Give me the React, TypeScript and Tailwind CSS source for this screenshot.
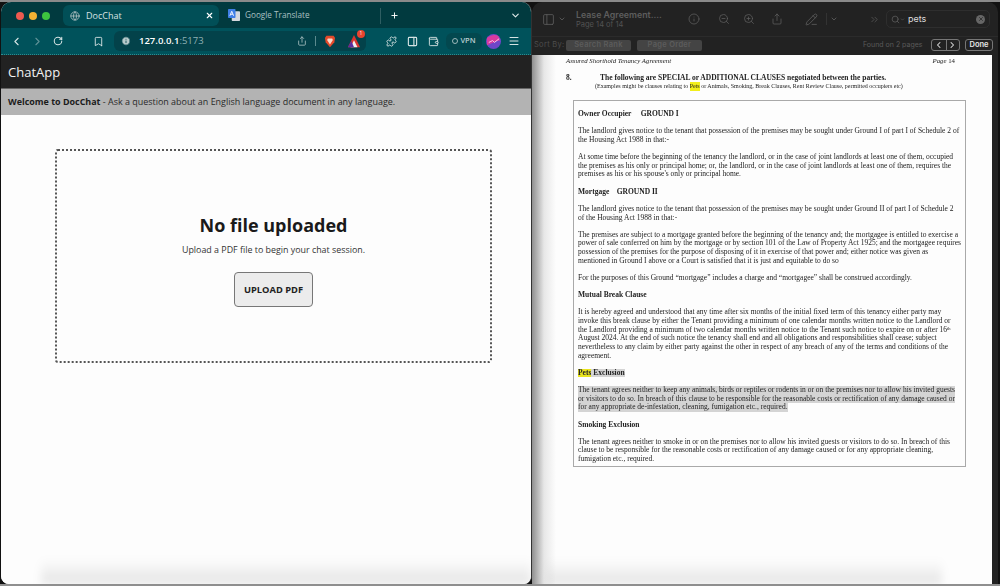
import {
  Bookmark,
  ChevronDown,
  ChevronLeft,
  ChevronRight,
  ChevronsRight,
  Globe,
  Info,
  Menu,
  PanelRight,
  PencilLine,
  Plus,
  Puzzle,
  RotateCw,
  Search,
  Share,
  Wallet,
  X,
  ZoomIn,
  ZoomOut,
} from 'lucide-react';

type Line = { text?: string; bold?: boolean };

const clauseLines: Line[] = [
  { text: 'The landlord gives notice to the tenant that possession of the premises may be sought under Ground I of part I of Schedule 2 of' },
  { text: 'the Housing Act 1988 in that:-' },
  {},
  { text: 'At some time before the beginning of the tenancy the landlord, or in the case of joint landlords at least one of them, occupied' },
  { text: 'the premises as his only or principal home; or, the landlord, or in the case of joint landlords at least one of them, requires the' },
  { text: "premises as his or his spouse's only or principal home." },
  {},
  { text: 'Mortgage\u00a0\u00a0\u00a0\u00a0GROUND II', bold: true },
  {},
  { text: 'The landlord gives notice to the tenant that possession of the premises may be sought under Ground II of part I of Schedule 2' },
  { text: 'of the Housing Act 1988 in that:-' },
  {},
  { text: 'The premises are subject to a mortgage granted before the beginning of the tenancy and; the mortgagee is entitled to exercise a' },
  { text: 'power of sale conferred on him by the mortgage or by section 101 of the Law of Property Act 1925; and the mortgagee requires' },
  { text: 'possession of the premises for the purpose of disposing of it in exercise of that power and; either notice was given as' },
  { text: 'mentioned in Ground I above or a Court is satisfied that it is just and equitable to do so' },
  {},
  { text: 'For the purposes of this Ground \u201cmortgage\u201d includes a charge and \u201cmortgagee\u201d shall be construed accordingly.' },
  {},
  { text: 'Mutual Break Clause', bold: true },
  {},
  { text: 'It is hereby agreed and understood that any time after six months of the initial fixed term of this tenancy either party may' },
  { text: 'invoke this break clause by either the Tenant providing a minimum of one calendar months written notice to the Landlord or' },
];

const smokingLines: Line[] = [
  { text: 'Smoking Exclusion', bold: true },
  {},
  { text: 'The tenant agrees neither to smoke in or on the premises nor to allow his invited guests or visitors to do so. In breach of this' },
  { text: 'clause to be responsible for the reasonable costs or rectification of any damage caused or for any appropriate cleaning,' },
  { text: 'fumigation etc., required.' },
];

const petLines = [
  'The tenant agrees neither to keep any animals, birds or reptiles or rodents in or on the premises nor to allow his invited guests',
  'or visitors to do so. In breach of this clause to be responsible for the reasonable costs or rectification of any damage caused or',
  'for any appropriate de-infestation, cleaning, fumigation etc., required.',
];

function DocLine({ text, bold }: Line) {
  return (
    <div className={`h-[8.63px] whitespace-nowrap ${bold ? 'font-bold' : ''}`}>
      {text}
    </div>
  );
}

function BraveIcon() {
  return (
    <svg viewBox="0 0 16 18" className="h-[13px] w-[12px]">
      <path d="M3 1h10l2 3-1 6-6 7-6-7-1-6z" fill="#e2492a" />
      <path d="M5 5h6l1 2-2 3-2 3-2-3-2-3z" fill="#f7d9cc" />
    </svg>
  );
}

function RewardsIcon() {
  return (
    <div className="relative h-[14px] w-[14px]">
      <svg viewBox="0 0 16 16" className="h-[14px] w-[14px]">
        <path d="M8 1l7 14H1z" fill="#d8352f" />
        <path d="M8 7l4 8H4z" fill="#eee" />
        <path d="M1 15l4-7 3 7z" fill="#5b2c9f" />
      </svg>
      <span className="absolute -top-[4px] -right-[4px] flex h-[8px] w-[8px] items-center justify-center rounded-full bg-[#e8432f] text-[5px] text-white">
        1
      </span>
    </div>
  );
}

function TranslateIcon() {
  return (
    <svg viewBox="0 0 16 16" className="h-[12px] w-[12px]">
      <rect x="5" y="3" width="11" height="13" rx="1" fill="#d5d9de" />
      <rect x="0" y="0" width="10" height="12" rx="1" fill="#3f7fe6" />
      <path d="M2.500 9l2.500-6 2.500 6M3.500 7h3" stroke="#fff" strokeWidth="1.200" fill="none" />
    </svg>
  );
}

function Avatar() {
  return (
    <svg viewBox="0 0 16 16" className="h-[15px] w-[15px]">
      <circle cx="8" cy="8" r="8" fill="#6f46c8" />
      <path d="M1 4C5 1 10 0 13 2l2 5C11 7 5 11 1 12z" fill="#d83a9e" />
      <path d="M3 9l4-2 2 2 5-4" stroke="#f9d0e6" strokeWidth="1" fill="none" />
    </svg>
  );
}

function BrowserWindow() {
  return (
    <div className="relative flex h-full w-[531px] shrink-0 flex-col overflow-hidden rounded-t-[10px] rounded-b-[8px] border-r border-[#333] bg-white font-['Open_Sans',sans-serif]">
      <div className="flex h-[26px] shrink-0 items-center bg-[#013a3f] pt-[1px] text-[#c4d6d6]">
        <div className="flex w-[62px] shrink-0 items-center gap-[5px] pl-[15px]">
          <span className="h-[8px] w-[8px] rounded-full bg-[#ee5a50]" />
          <span className="h-[8px] w-[8px] rounded-full bg-[#f2b233]" />
          <span className="h-[8px] w-[8px] rounded-full bg-[#3dc53f]" />
        </div>
        <div className="flex h-[21px] w-[156px] shrink-0 items-center rounded-[6px] bg-[#014f57] pr-[5px] pl-[7px] text-[9px] text-[#d6e2e2]">
          <Globe className="h-[10px] w-[10px] text-[#aebfc1]" />
          <span className="ml-[6px] flex-1">DocChat</span>
          <X className="h-[9px] w-[9px] text-white" strokeWidth={3} />
        </div>
        <div className="flex w-[161px] shrink-0 items-center gap-[5px] pl-[9px] text-[8.200px] text-[#a9c0c2]">
          <TranslateIcon />
          <span>Google Translate</span>
        </div>
        <div className="h-[16px] w-px bg-[#2f5e62]" />
        <Plus className="ml-[9px] h-[9px] w-[9px] text-white" strokeWidth={2.500} />
        <ChevronDown className="mr-[10px] ml-auto h-[11px] w-[11px] text-[#dfe9e9]" strokeWidth={2.500} />
      </div>

      <div className="flex h-[27px] shrink-0 items-center border-b border-dotted border-[#2d8b8f] bg-[#00525b] text-[#d5e3e3]">
        <ChevronLeft className="ml-[9px] h-[13px] w-[13px]" strokeWidth={2} />
        <ChevronRight className="ml-[8px] h-[13px] w-[13px] text-[#5f9297]" strokeWidth={2} />
        <RotateCw className="ml-[9px] h-[10px] w-[10px]" strokeWidth={2.500} />
        <Bookmark className="ml-[30px] h-[11px] w-[11px]" strokeWidth={2} />
        <div className="ml-[10px] flex h-[20px] w-[252px] shrink-0 items-center rounded-[6px] bg-[#03424a] pl-[7px] text-[9.500px]">
          <Info className="h-[10px] w-[10px] fill-[#b7c9ca] text-[#03424a]" strokeWidth={2} />
          <span className="ml-[8px] font-semibold text-white">127.0.0.1</span>
          <span className="text-[#8fb0b3]">:5173</span>
          <Share className="ml-auto h-[10px] w-[10px] text-[#a9c0c2]" strokeWidth={2} />
          <div className="mx-[8px] h-[10px] w-px bg-[#5b8a8e]" />
          <BraveIcon />
          <div className="mr-[5px] ml-[11px]">
            <RewardsIcon />
          </div>
        </div>
        <Puzzle className="ml-[20px] h-[11px] w-[11px]" strokeWidth={2} />
        <PanelRight className="ml-[10px] h-[11px] w-[11px]" strokeWidth={2.500} />
        <Wallet className="ml-[10px] h-[11px] w-[11px]" strokeWidth={2} />
        <div className="ml-[7px] flex h-[17px] w-[36px] items-center justify-center gap-[2px] rounded-[6px] bg-[#03484f] text-[7.500px] font-semibold text-[#b9cfd0]">
          <span className="h-[6px] w-[6px] rounded-full border-[1.500px] border-[#9db7b9]" />
          VPN
        </div>
        <div className="ml-[4px]">
          <Avatar />
        </div>
        <Menu className="ml-[7px] h-[12px] w-[12px]" strokeWidth={2} />
      </div>

      <div className="flex h-[33px] shrink-0 items-center bg-[#222] pt-[2px] pl-[7px] text-[13px] text-[#f2f2f2]">
        ChatApp
      </div>
      <div className="flex h-[27px] shrink-0 items-center border-t border-[#666] bg-[#b3b3b3] pl-[7px] text-[8.950px] text-[#2a2a2a]">
        <b className="font-bold text-[#1c1c1c]">Welcome to DocChat</b>
        <span className="whitespace-pre"> - Ask a question about an English language document in any language.</span>
      </div>

      <div className="flex-1 bg-[#fdfdfd] pt-[34px] pl-[54px]">
        <div className="flex h-[214px] w-[437px] flex-col items-center rounded-[3px] border-2 border-dotted border-[#555] pt-[60px]">
          <h1 className="text-[18px] leading-[28px] font-bold text-[#1a1a1a]">No file uploaded</h1>
          <p className="mt-[4px] text-[8.900px] leading-[14px] text-[#333]">
            Upload a PDF file to begin your chat session.
          </p>
          <button
            type="button"
            className="mt-[15px] h-[35px] w-[79px] rounded-[4px] border border-[#777] bg-[#ececec] text-[9.300px] font-bold text-[#222]"
          >
            UPLOAD PDF
          </button>
        </div>
      </div>
      <div className="absolute right-0 bottom-0 left-[40px] h-[26px] bg-gradient-to-t from-black/10 to-transparent blur-[4px]" />
    </div>
  );
}

function PreviewToolbar() {
  return (
    <div className="shrink-0 font-['Inter',sans-serif]">
      <div className="flex h-[34px] items-center text-[#5f5f5f]">
        <PanelRight className="ml-[10px] h-[13px] w-[13px] rotate-180" strokeWidth={1.500} />
        <ChevronDown className="ml-[3px] h-[8px] w-[8px]" strokeWidth={2.500} />
        <div className="ml-[10px] w-[94px] shrink-0">
          <div className="text-[8.800px] leading-[11px] font-semibold whitespace-nowrap text-[#5d5d5d]">Lease Agreement....</div>
          <div className="text-[7.500px] leading-[10px] text-[#525252]">Page 14 of 14</div>
        </div>
        <Info className="ml-[18px] h-[12px] w-[12px]" strokeWidth={1.500} />
        <ZoomOut className="ml-[18px] h-[12px] w-[12px]" strokeWidth={1.500} />
        <ZoomIn className="ml-[13px] h-[12px] w-[12px]" strokeWidth={1.500} />
        <Share className="ml-[16px] h-[12px] w-[12px]" strokeWidth={1.500} />
        <PencilLine className="ml-[22px] h-[13px] w-[13px]" strokeWidth={1.500} />
        <div className="ml-[8px] h-[12px] w-px bg-[#333]" />
        <ChevronDown className="ml-[3px] h-[8px] w-[8px]" strokeWidth={2.500} />
        <ChevronsRight className="ml-[31px] h-[11px] w-[11px]" strokeWidth={1.500} />
        <div className="ml-[6px] flex h-[18px] w-[104px] shrink-0 items-center rounded-[5px] border border-[#2e2e2e] pr-[4px] pl-[4px]">
          <Search className="h-[9px] w-[9px]" strokeWidth={2} />
          <ChevronDown className="h-[5px] w-[5px]" strokeWidth={3} />
          <span className="ml-[3px] flex-1 text-[9px] text-[#dcdcdc]">pets</span>
          <span className="flex h-[9px] w-[9px] items-center justify-center rounded-full bg-[#666]">
            <X className="h-[6px] w-[6px] text-[#262626]" strokeWidth={3} />
          </span>
        </div>
      </div>
      <div className="flex h-[19px] items-center border-t border-[#2b2b2b] pb-[2px] text-[7.500px] tracking-[0.3px] text-[#4d4d4d]">
        <span className="ml-[2px] w-[32px] shrink-0 whitespace-nowrap">Sort By:</span>
        <span className="flex h-[11px] w-[65px] shrink-0 items-center justify-center rounded-[2px] bg-[#444] font-semibold whitespace-nowrap text-[#5c5c5c]">Search Rank</span>
        <span className="ml-[6px] flex h-[11px] w-[65px] shrink-0 items-center justify-center rounded-[2px] bg-[#444] font-semibold whitespace-nowrap text-[#5c5c5c]">Page Order</span>
        <span className="ml-[161px] w-[68px] shrink-0 text-[7px] tracking-normal whitespace-nowrap text-[#5a5a5a]">Found on 2 pages</span>
        <div className="flex h-[12px] w-[29px] shrink-0 items-center rounded-[3px] border border-[#777] text-[#ddd]">
          <ChevronLeft className="h-[10px] w-[14px]" strokeWidth={2.500} />
          <div className="h-full w-px bg-[#777]" />
          <ChevronRight className="h-[10px] w-[13px]" strokeWidth={2.500} />
        </div>
        <span className="ml-[5px] flex h-[12px] w-[28px] shrink-0 items-center justify-center rounded-[3px] border border-[#777] font-semibold tracking-normal text-[#e6e6e6]">Done</span>
      </div>
    </div>
  );
}

function ClauseBox() {
  return (
    <div className="ml-[41px] h-[367px] w-[393px] border border-[#a9a9a9] pt-[9px] pl-[4px] text-[7.500px] leading-[8.630px] text-[#222] blur-[0.35px]">
      <div className="mb-[8.630px] h-[8.630px] font-bold whitespace-pre">{'Owner Occupier     GROUND I'}</div>
      {clauseLines.map((line, i) => (
        <DocLine key={i} {...line} />
      ))}
      <div className="flex h-[8.630px] whitespace-nowrap">
        the Landlord providing a minimum of two calendar months written notice to the Tenant such notice to expire on or after 16
        <sup className="top-0 text-[4.500px] leading-[5px]">th</sup>
      </div>
      <DocLine text="August 2024.  At the end of such notice the tenancy shall end and all obligations and responsibilities shall cease; subject" />
      <DocLine text="nevertheless to any claim by either party against the other in respect of any breach of any of the terms and conditions of the" />
      <DocLine text="agreement." />
      <DocLine />
      <div className="flex h-[8.630px] font-bold whitespace-nowrap">
        <span className="bg-[#e9e41d]">Pets</span>
        <span className="bg-[#d4d4d4] pl-[2px]">Exclusion</span>
      </div>
      <DocLine />
      <div className="flex flex-col items-start">
        {petLines.map((text) => (
          <div key={text} className="h-[8.630px] bg-[#d4d4d4] whitespace-nowrap">
            {text}
          </div>
        ))}
      </div>
      <DocLine />
      {smokingLines.map((line, i) => (
        <DocLine key={i} {...line} />
      ))}
    </div>
  );
}

function PreviewWindow() {
  return (
    <div className="flex h-full flex-1 flex-col rounded-t-[10px] bg-[#222] pr-[6px]">
      <div className="-mr-[6px]">
        <PreviewToolbar />
      </div>
      <div className="relative flex-1 overflow-hidden bg-[#fdfdfd] pl-[34px] font-['Liberation_Serif',serif] text-[#222]">
        <div className="flex h-[11px] items-center pt-[1px] pr-[37px] text-[6.800px] italic blur-[0.3px]">
          <span>Assured Shorthold Tenancy Agreement</span>
          <span className="ml-auto">
            Page <span className="not-italic">14</span>
          </span>
        </div>
        <div className="mt-[6px] flex h-[11px] items-center text-[7.500px] font-bold whitespace-nowrap blur-[0.3px]">
          <span className="w-[34px] shrink-0">8.</span>
          <span>The following are SPECIAL or ADDITIONAL CLAUSES negotiated between the parties.</span>
        </div>
        <div className="flex h-[6px] items-center pl-[29px] text-[6px] whitespace-nowrap blur-[0.3px]">
          (Examples might be clauses relating to&nbsp;
          <span className="bg-[#f2ee1c]">Pets</span>
          &nbsp;or Animals, Smoking, Break Clauses, Rent Review Clause, permitted occupiers etc)
        </div>
        <div className="mt-[11px] -ml-[34px]">
          <ClauseBox />
        </div>
        <div className="absolute top-0 bottom-0 left-0 w-[24px] bg-gradient-to-r from-[#8f8f8f] via-[#d8d8d8]/60 to-transparent" />
        <div className="absolute right-[50px] bottom-0 left-[16px] h-[24px] bg-gradient-to-t from-black/10 to-transparent blur-[4px]" />
      </div>
    </div>
  );
}

export default function App() {
  return (
    <div className="flex h-[586px] w-[1000px] overflow-hidden border-t-2 border-b-2 border-t-[#8a8a8a] border-b-[#8f8f8f] bg-[#111] pr-[2px] pl-[1px]">
      <BrowserWindow />
      <PreviewWindow />
    </div>
  );
}
